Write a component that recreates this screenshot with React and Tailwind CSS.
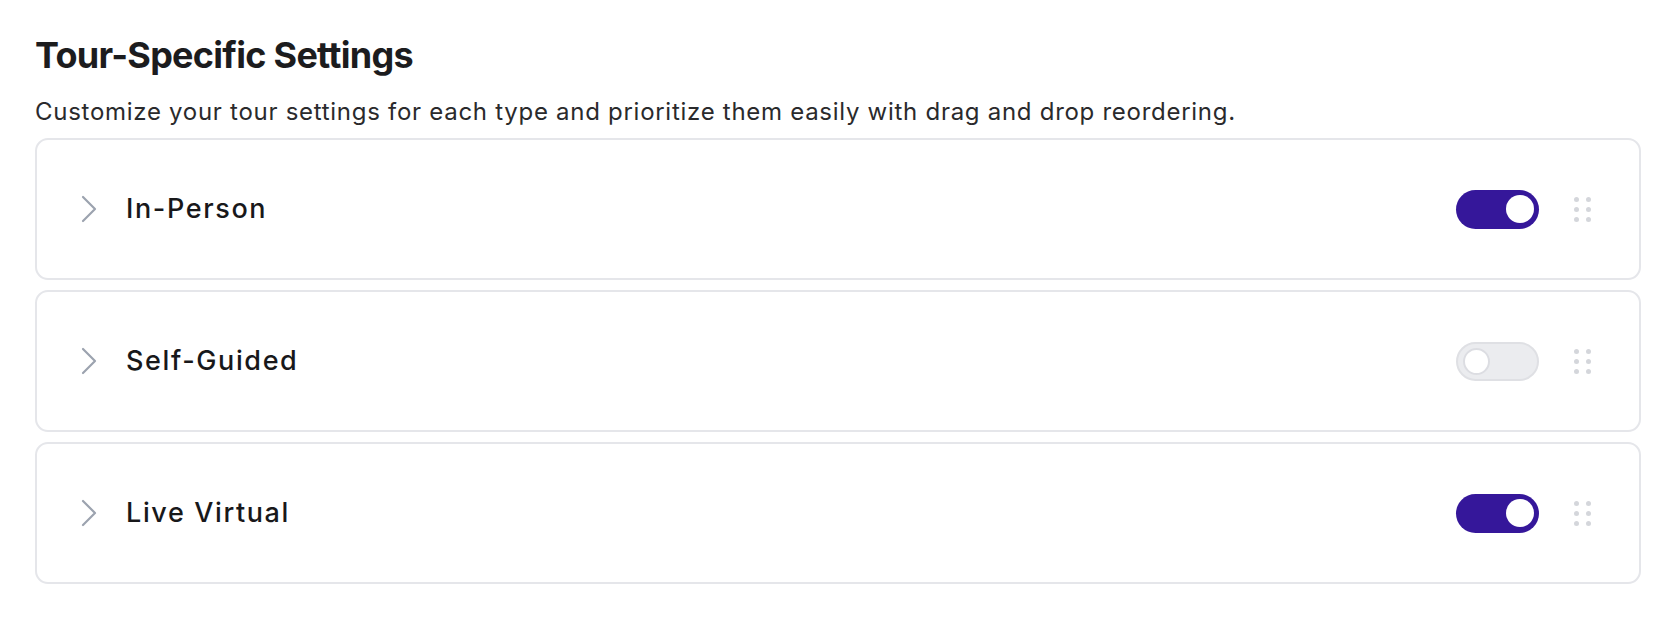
import React, { useState } from 'react';

const tourTypes = [
  { id: 'in-person', label: 'In-Person', enabled: true },
  { id: 'self-guided', label: 'Self-Guided', enabled: false },
  { id: 'live-virtual', label: 'Live Virtual', enabled: true },
];

const Toggle = ({ checked, onChange }) => (
  <button
    type="button"
    role="switch"
    aria-checked={checked}
    onClick={onChange}
    className={
      checked
        ? 'flex h-[39px] w-[83px] items-center justify-end rounded-full bg-[#35179a] pr-[5px]'
        : 'flex h-[39px] w-[83px] items-center justify-start rounded-full border-2 border-[#dfe0e4] bg-[#ebecef] pl-[5px]'
    }
  >
    {checked ? (
      <span className="h-[28px] w-[28px] rounded-full bg-white" />
    ) : (
      <span className="h-[27px] w-[27px] rounded-full border-2 border-[#dcdde2] bg-white" />
    )}
  </button>
);

const DragHandle = () => (
  <div className="grid grid-cols-2 gap-x-[7px] gap-y-[5px]">
    {Array.from({ length: 6 }).map((_, i) => (
      <span key={i} className="h-[5px] w-[5px] rounded-full bg-[#d4d6db]" />
    ))}
  </div>
);

const Chevron = () => (
  <svg width="18" height="28" viewBox="0 0 18 28" fill="none">
    <polyline
      points="3,2 15,14 3,26"
      stroke="#9ca3af"
      strokeWidth="2.2"
      strokeLinecap="round"
      strokeLinejoin="round"
    />
  </svg>
);

const TourRow = ({ tour, onToggle }) => (
  <div className="flex h-[142px] items-center rounded-[13px] border-2 border-[#e5e6ea] bg-white pl-[43px] pr-[48px]">
    <Chevron />
    <span
      className="ml-[28px] flex-1 text-[27px] font-medium tracking-[0.06em] text-[#18181a]"
      style={{ fontFamily: 'Inter, "Noto Sans", sans-serif' }}
    >
      {tour.label}
    </span>
    <Toggle checked={tour.enabled} onChange={onToggle} />
    <div className="ml-[35px]">
      <DragHandle />
    </div>
  </div>
);

export default function App() {
  const [tours, setTours] = useState(tourTypes);

  const toggleTour = (id) => {
    setTours((prev) => prev.map((t) => (t.id === id ? { ...t, enabled: !t.enabled } : t)));
  };

  return (
    <div
      className="min-h-screen bg-white pl-[35px] pr-[33px] pt-[33px]"
      style={{ fontFamily: 'Inter, "Liberation Sans", sans-serif' }}
    >
      <h1 className="text-[36px] font-bold leading-[44px] tracking-[-0.02em] text-[#1c1c1e]">
        Tour-Specific Settings
      </h1>
      <p className="mt-[19px] text-[24px] leading-[32px] tracking-[0.03em] text-[#2a2a2c]">
        Customize your tour settings for each type and prioritize them easily with drag and drop reordering.
      </p>
      <div className="mt-[10px] flex flex-col gap-[10px]">
        {tours.map((tour) => (
          <TourRow key={tour.id} tour={tour} onToggle={() => toggleTour(tour.id)} />
        ))}
      </div>
    </div>
  );
}
